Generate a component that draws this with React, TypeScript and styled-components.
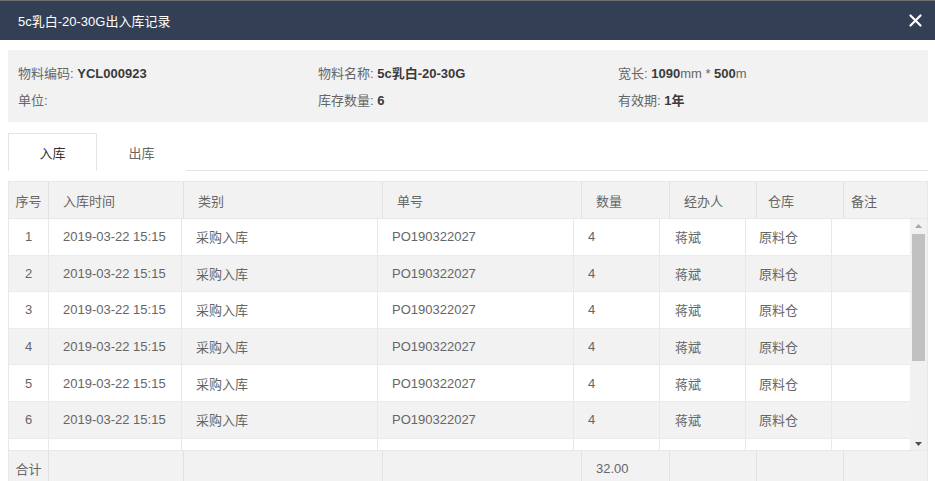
import styled, { createGlobalStyle } from "styled-components";

const GlobalStyle = createGlobalStyle`
  html, body {
    margin: 0;
    padding: 0;
    height: 481px;
    overflow: hidden;
    background: #fff;
  }
  * {
    box-sizing: border-box;
  }
  body {
    font-family: "Liberation Sans", Arial, "Noto Sans CJK SC", sans-serif;
    font-size: 13px;
    color: #666;
  }
`;

const headCols = "40px 135px 199px 199px 88px 87px 87px 85px";
const bodyCols = "40px 133px 196px 196px 86px 86px 86px 80px";

const rows = [1, 2, 3, 4, 5, 6].map((n) => ({
  no: n,
  time: "2019-03-22 15:15",
  kind: "采购入库",
  code: "PO190322027",
  qty: "4",
  person: "蒋斌",
  store: "原料仓",
  note: "",
}));

export default function App() {
  return (
    <Dialog>
      <GlobalStyle />
      <TitleBar>
        <Title>5c乳白-20-30G出入库记录</Title>
        <Close aria-label="close">
          <svg width="13" height="13" viewBox="0 0 13 13">
            <path
              d="M1.5 1.5 L11.5 11.5 M11.5 1.5 L1.5 11.5"
              stroke="#fff"
              strokeWidth="2.2"
              strokeLinecap="round"
            />
          </svg>
        </Close>
      </TitleBar>

      <Content>
        <InfoPanel>
          <InfoItem>
            物料编码: <b>YCL000923</b>
          </InfoItem>
          <InfoItem>
            物料名称: <b>5c乳白-20-30G</b>
          </InfoItem>
          <InfoItem>
            宽长: <b>1090</b>mm * <b>500</b>m
          </InfoItem>
          <InfoItem>单位:</InfoItem>
          <InfoItem>
            库存数量: <b>6</b>
          </InfoItem>
          <InfoItem>
            有效期: <b>1年</b>
          </InfoItem>
        </InfoPanel>

        <Tabs>
          <Tab $active>入库</Tab>
          <Tab>出库</Tab>
        </Tabs>

        <Table>
          <HeadRow>
            <HeadCell $center>序号</HeadCell>
            <HeadCell>入库时间</HeadCell>
            <HeadCell>类别</HeadCell>
            <HeadCell>单号</HeadCell>
            <HeadCell>数量</HeadCell>
            <HeadCell>经办人</HeadCell>
            <HeadCell $pad={11}>仓库</HeadCell>
            <HeadCell $pad={7}>备注</HeadCell>
          </HeadRow>

          <BodyWrap>
            <Rows>
              {rows.map((r) => (
                <Row key={r.no} $alt={r.no % 2 === 0}>
                  <Cell $center>{r.no}</Cell>
                  <Cell>{r.time}</Cell>
                  <Cell>{r.kind}</Cell>
                  <Cell>{r.code}</Cell>
                  <Cell>{r.qty}</Cell>
                  <Cell $pad={15}>{r.person}</Cell>
                  <Cell $pad={13}>{r.store}</Cell>
                  <Cell>{r.note}</Cell>
                </Row>
              ))}
              {/* next row, scrolled below the fold */}
              <Row>
                {Array.from({ length: 8 }).map((_, i) => (
                  <Cell key={i} />
                ))}
              </Row>
            </Rows>
            <ScrollBar>
              <Arrow>
                <svg width="7" height="4" viewBox="0 0 7 4">
                  <path d="M0 4 L3.5 0 L7 4 Z" fill="#a8a8a8" />
                </svg>
              </Arrow>
              <Track>
                <Thumb />
              </Track>
              <Arrow>
                <svg width="7" height="4" viewBox="0 0 7 4">
                  <path d="M0 0 L7 0 L3.5 4 Z" fill="#505050" />
                </svg>
              </Arrow>
            </ScrollBar>
          </BodyWrap>

          <FootRow>
            <FootCell $center>合计</FootCell>
            <FootCell />
            <FootCell />
            <FootCell />
            <FootCell>32.00</FootCell>
            <FootCell />
            <FootCell />
            <FootCell />
          </FootRow>
        </Table>
      </Content>
    </Dialog>
  );
}

const Dialog = styled.div`
  width: 935px;
  height: 481px;
  overflow: hidden;
  background: #fff;
`;

const TitleBar = styled.div`
  height: 40px;
  border-top: 1px solid #707070;
  background: #333f55;
  display: flex;
  align-items: center;
  justify-content: space-between;
  padding: 0 13px 0 18px;
`;

const Title = styled.div`
  color: #fff;
  font-size: 13px;
`;

const Close = styled.div`
  width: 13px;
  height: 13px;
  display: flex;
`;

const Content = styled.div`
  padding: 10px 7px 0 8px;
`;

const InfoPanel = styled.div`
  background: #f2f2f2;
  padding: 9px 10px;
  display: grid;
  grid-template-columns: repeat(3, 300px);
  grid-auto-rows: 27px;
  align-items: center;
`;

const InfoItem = styled.div`
  color: #666;
  font-size: 13px;

  b {
    color: #3a3a3a;
    font-weight: bold;
  }
`;

const Tabs = styled.div`
  margin-top: 11px;
  height: 38px;
  display: flex;
  border-bottom: 1px solid #e4e4e4;
`;

const Tab = styled.div<{ $active?: boolean }>`
  width: 89px;
  height: 38px;
  display: flex;
  align-items: center;
  justify-content: center;
  font-size: 13px;
  color: ${(p) => (p.$active ? "#333" : "#666")};
  background: #fff;
  border: 1px solid ${(p) => (p.$active ? "#e4e4e4" : "transparent")};
  border-bottom: none;
  margin-bottom: -1px;
`;

const Table = styled.div`
  margin-top: 10px;
  width: 920px;
  border: 1px solid #e8e8e8;
  border-bottom: none;
`;

const HeadRow = styled.div`
  display: grid;
  grid-template-columns: ${headCols};
  height: 36px;
  background: #f2f2f2;
`;

const HeadCell = styled.div<{ $center?: boolean; $pad?: number }>`
  display: flex;
  align-items: center;
  justify-content: ${(p) => (p.$center ? "center" : "flex-start")};
  padding-left: ${(p) => (p.$center ? 0 : p.$pad ?? 14)}px;
  border-right: 1px solid #e2e2e2;
  color: #666;
  &:last-child {
    border-right: none;
  }
`;

const BodyWrap = styled.div`
  display: flex;
  height: 232px;
  overflow: hidden;
  border-top: 1px solid #e8e8e8;
`;

const Rows = styled.div`
  width: 903px;
  height: 232px;
  overflow: hidden;
`;

const Row = styled.div<{ $alt?: boolean }>`
  display: grid;
  grid-template-columns: ${bodyCols};
  height: 36.6px;
  background: ${(p) => (p.$alt ? "#f2f2f2" : "#fff")};
  border-bottom: 1px solid #ebebeb;
`;

const Cell = styled.div<{ $center?: boolean; $pad?: number }>`
  display: flex;
  align-items: center;
  justify-content: ${(p) => (p.$center ? "center" : "flex-start")};
  padding-left: ${(p) => (p.$center ? 0 : p.$pad ?? 14)}px;
  border-right: 1px solid #e8e8e8;
  color: #666;
  white-space: nowrap;
`;

const ScrollBar = styled.div`
  width: 17px;
  height: 232px;
  background: #f1f1f1;
  display: flex;
  flex-direction: column;
`;

const Arrow = styled.div`
  height: 14px;
  display: flex;
  align-items: center;
  justify-content: center;
`;

const Track = styled.div`
  flex: 1;
  padding: 1px 2px;
`;

const Thumb = styled.div`
  height: 127px;
  background: #c1c1c1;
`;

const FootRow = styled.div`
  display: grid;
  grid-template-columns: ${headCols};
  height: 36px;
  background: #f2f2f2;
  border-top: 1px solid #e8e8e8;
`;

const FootCell = styled.div<{ $center?: boolean }>`
  display: flex;
  align-items: center;
  justify-content: ${(p) => (p.$center ? "center" : "flex-start")};
  padding-left: ${(p) => (p.$center ? 0 : 14)}px;
  border-right: 1px solid #e2e2e2;
  color: #666;
  &:last-child {
    border-right: none;
  }
`;
